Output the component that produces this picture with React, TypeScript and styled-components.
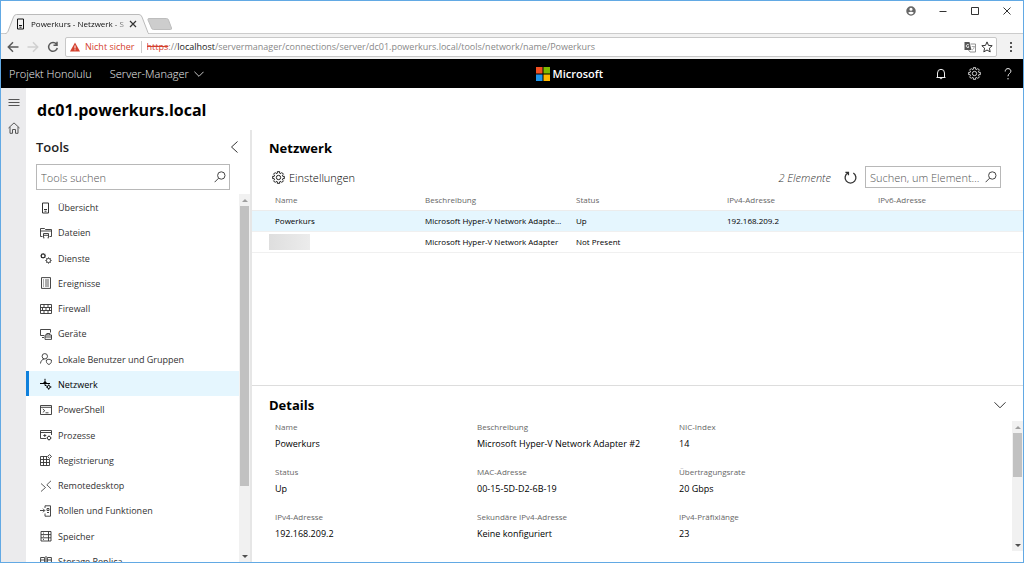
import React from 'react';
import styled, { createGlobalStyle } from 'styled-components';

const GlobalStyle = createGlobalStyle`
  * { box-sizing: border-box; }
  body { margin: 0; background: #fff; }
  button, input { font: inherit; color: inherit; }
  button { border: 0; padding: 0; background: none; cursor: pointer; }
  a { color: inherit; text-decoration: none; }
  h1, h2, ul, dl, dd, dt { margin: 0; padding: 0; }
`;

/* ---------- window and browser chrome ---------- */

const Window = styled.div`
  display: flex;
  flex-direction: column;
  height: 100vh;
  overflow: hidden;
  border: 1px solid #62a9e4;
  font-family: 'Open Sans', 'Noto Sans', sans-serif;
  font-size: 9px;
  color: #333;
  background: #fff;
`;

const TitleBar = styled.div`
  display: flex;
  justify-content: space-between;
  flex: none;
  height: 32px;
`;

const TabStrip = styled.div`
  display: flex;
  align-items: flex-end;
  padding-left: 4px;
`;

const Tab = styled.div`
  position: relative;
  display: flex;
  align-items: center;
  gap: 2px;
  width: 144px;
  height: 20px;
  margin-bottom: -1px;
  padding: 0 12px 0 10px;
`;

const TabShape = styled.svg`
  position: absolute;
  inset: 0;
  width: 100%;
  height: 100%;
`;

const TabTitle = styled.button`
  position: relative;
  display: flex;
  align-items: center;
  gap: 4px;
  flex: 1;
  min-width: 0;
  font-size: 8px;
  white-space: nowrap;
  text-align: left;
  line-height: 14px;
  color: #111;
  mask-image: linear-gradient(to right, #000 86%, rgba(0, 0, 0, 0.3));
`;

const TabClose = styled.button`
  position: relative;
  display: flex;
`;

const NewTab = styled.button`
  display: flex;
  margin: 0 0 3px -2px;
`;

const WindowControls = styled.div`
  display: flex;
  align-items: flex-start;
  padding-top: 3px;
`;

const WindowButton = styled.button`
  display: flex;
  align-items: center;
  justify-content: center;
  width: 32px;
  height: 14px;
  color: #333;
`;

const AddressRow = styled.div`
  display: flex;
  align-items: center;
  flex: none;
  gap: 8px;
  height: 26px;
  padding: 0 6px;
  border-top: 1px solid #ccc;
  background: #f2f2f2;
`;

const NavButton = styled.button<{ $dim?: boolean }>`
  display: flex;
  width: 12px;
  color: ${(p) => (p.$dim ? '#d0d0d0' : '#5a5a5a')};
`;

const AddressBox = styled.div`
  display: flex;
  align-items: center;
  flex: 1;
  gap: 5px;
  height: 20px;
  margin-left: -2px;
  padding: 0 3px 0 4px;
  border: 1px solid #c8c8c8;
  border-radius: 2px;
  color: #888;
  background: #fff;
`;

const Insecure = styled.span`
  padding-right: 6px;
  border-right: 1px solid #ccc;
  line-height: 12px;
  color: #d4422f;
  white-space: nowrap;
`;

const Url = styled.div`
  flex: 1;
  min-width: 0;
  overflow: hidden;
  white-space: nowrap;
  outline: none;

  s { color: #d4422f; }
  b { font-weight: 400; color: #222; }
`;

/* ---------- app shell ---------- */

const AppHeader = styled.header`
  display: flex;
  align-items: center;
  justify-content: space-between;
  flex: none;
  height: 29px;
  padding: 0 9px 0 8px;
  font-size: 11px;
  font-weight: 300;
  color: #f0f0f0;
  background: #000;
`;

const HeaderGroup = styled.div<{ $gap: number }>`
  display: flex;
  align-items: center;
  gap: ${(p) => p.$gap}px;
`;

const HeaderLink = styled.a`
  white-space: nowrap;
`;

const HeaderButton = styled.button`
  display: flex;
  align-items: center;
  gap: 5px;
`;

const Brand = styled.div`
  display: flex;
  align-items: center;
  gap: 3px;
  font-weight: 600;
  color: #fff;
`;

const Shell = styled.div`
  display: flex;
  flex: 1;
  min-height: 0;
`;

const Rail = styled.nav`
  display: flex;
  flex-direction: column;
  align-items: center;
  flex: none;
  gap: 14px;
  width: 25px;
  padding-top: 8px;
  color: #555;
  background: #ebebed;
`;

const RailButton = styled.button`
  display: flex;
`;

const Page = styled.div`
  display: flex;
  flex-direction: column;
  flex: 1;
  min-width: 0;
`;

const PageTitle = styled.h1`
  flex: none;
  height: 42px;
  padding-left: 11px;
  font-size: 16px;
  font-weight: 700;
  line-height: 44px;
  color: #000;
`;

const Columns = styled.div`
  display: flex;
  flex: 1;
  min-height: 0;
`;

/* ---------- tools panel ---------- */

const ToolsPanel = styled.aside`
  display: flex;
  flex-direction: column;
  flex: none;
  width: 226px;
  padding-top: 4px;
  border-right: 2px solid #e6e6e6;
`;

const ToolsHead = styled.div`
  display: flex;
  align-items: center;
  justify-content: space-between;
  flex: none;
  padding: 0 9px 0 10px;
`;

const SectionTitle = styled.h2<{ $dark?: boolean }>`
  font-size: 13px;
  font-weight: ${(p) => (p.$dark ? 700 : 600)};
  line-height: 26px;
  color: ${(p) => (p.$dark ? '#000' : '#222')};
`;

const IconButton = styled.button`
  display: flex;
  color: #333;
`;

const SearchBox = styled.label<{ $height: number }>`
  display: flex;
  align-items: center;
  flex: none;
  gap: 2px;
  height: ${(p) => p.$height}px;
  padding: 0 3px 0 4px;
  border: 1px solid #b8b8b8;
  font-size: 11px;
  color: #444;
  background: #fff;

  input {
    flex: 1;
    min-width: 0;
    padding: 0;
    border: 0;
    outline: 0;
    font-weight: 300;
    background: none;
    text-overflow: ellipsis;
  }
  input::placeholder { color: #555; }
`;

const ToolsSearch = styled(SearchBox)`
  margin: 4px 20px 4px 10px;
`;

const ToolsScroll = styled.div`
  display: flex;
  flex: 1;
  min-height: 0;
  overflow: hidden;
`;

const ToolList = styled.ul`
  display: grid;
  grid-auto-rows: minmax(25px, 1fr);
  flex: 1;
  min-height: calc(100% + 11px);
  height: max-content;
  list-style: none;
`;

const ToolLink = styled.a<{ $active?: boolean }>`
  display: flex;
  align-items: center;
  gap: 6px;
  height: 100%;
  padding: 2px 0 0 11px;
  border-left: 3px solid ${(p) => (p.$active ? '#0f80dc' : 'transparent')};
  color: ${(p) => (p.$active ? '#000' : '#333')};
  background: ${(p) => (p.$active ? '#e5f6fe' : 'none')};
`;

/* ---------- scrollbar ---------- */

const Track = styled.div`
  display: flex;
  flex-direction: column;
  flex: none;
  width: 11px;
  padding: 0 1px;
  background: #f1f1f1;
`;

const Arrow = styled.span<{ $down?: boolean }>`
  display: flex;
  align-items: center;
  justify-content: center;
  height: 12px;
  margin-top: ${(p) => (p.$down ? 'auto' : '0')};

  &::before {
    content: '';
    border: 3px solid transparent;
    border-top: ${(p) => (p.$down ? '3px solid #505050' : '0')};
    border-bottom: ${(p) => (p.$down ? '0' : '3px solid #a0a0a0')};
  }
`;

const Thumb = styled.span<{ $share: number }>`
  height: ${(p) => p.$share}%;
  background: #c1c1c1;
`;

function Scrollbar({ share }: { share: number }) {
  return (
    <Track aria-hidden="true">
      <Arrow />
      <Thumb $share={share} />
      <Arrow $down />
    </Track>
  );
}

/* ---------- main panel ---------- */

const Main = styled.main`
  display: flex;
  flex-direction: column;
  flex: 1;
  min-width: 0;
`;

const ListSection = styled.section`
  flex: 1;
  min-height: 0;
  padding-top: 5px;
`;

const PanelHead = styled.div`
  display: flex;
  align-items: center;
  justify-content: space-between;
  padding: 0 17px;
`;

const CommandBar = styled.div`
  display: flex;
  align-items: center;
  gap: 13px;
  height: 22px;
  margin-top: 5px;
  padding: 0 22px 0 20px;
  font-size: 11px;
  font-weight: 300;
`;

const Command = styled.button`
  display: flex;
  align-items: center;
  gap: 4px;
  margin-right: auto;
  color: #000;
`;

const Count = styled.span`
  font-style: italic;
  color: #333;
`;

const ItemSearch = styled(SearchBox)`
  width: 136px;
  margin-left: -5px;
`;

const Table = styled.table`
  width: 100%;
  margin-top: 1px;
  border-collapse: collapse;
  table-layout: fixed;

  th:first-child { width: 167px; }
  th:first-child, td:first-child { padding-left: 23px; }
`;

const HeadCell = styled.th`
  height: 21px;
  padding: 0 6px;
  border-bottom: 1px solid #ececec;
  font-size: 8px;
  font-weight: 400;
  text-align: left;
  color: #666;
`;

const Row = styled.tr<{ $selected?: boolean }>`
  height: 21px;
  border-bottom: 1px solid #f0f0f0;
  background: ${(p) => (p.$selected ? '#e5f6fe' : 'none')};
`;

const Cell = styled.td`
  padding: 0 6px;
  overflow: hidden;
  font-size: 8px;
  white-space: nowrap;
  text-overflow: ellipsis;
  color: #000;
`;

const Redacted = styled.span`
  display: block;
  width: 41px;
  height: 16px;
  margin-left: -6px;
  background: linear-gradient(to right, #dedede, #ececec);
`;

const DetailSection = styled.section`
  flex: none;
  padding: 6px 0 11px;
  border-top: 1px solid #ddd;
`;

const DetailBody = styled.div`
  display: flex;
  height: 130px;
  margin-top: 3px;
`;

const Fields = styled.dl`
  display: grid;
  grid-template-columns: 202px 202px 1fr;
  grid-auto-rows: 45px;
  flex: 1;
  padding-left: 23px;

  dt {
    font-size: 8px;
    line-height: 12px;
    color: #666;
  }
  dd {
    margin-top: 4px;
    line-height: 14px;
    color: #000;
  }
`;

/* ---------- icons ---------- */

const Glyph = styled.svg`
  flex: none;
`;

type IconProps = { size?: number; box?: number; weight?: number; children: React.ReactNode };

function Icon({ size = 12, box = 12, weight = 1, children }: IconProps) {
  return (
    <Glyph
      width={size}
      height={size}
      viewBox={`0 0 ${box} ${box}`}
      fill="none"
      stroke="currentColor"
      strokeWidth={weight}
      aria-hidden="true"
    >
      {children}
    </Glyph>
  );
}

const ServerIcon = () => (
  <Icon>
    <path d="M2.500 1h6v10h-6zM4.500 9.200h2M4 7.500h3" />
  </Icon>
);

const GearIcon = ({ size = 12 }: { size?: number }) => {
  const teeth = Array.from({ length: 8 }, (_, i) => {
    const a = (i * Math.PI) / 4;
    const at = (r: number, d: number) =>
      `${(12 + r * Math.cos(a + d)).toFixed(2)} ${(12 + r * Math.sin(a + d)).toFixed(2)}`;
    return `${at(8.2, -0.26)} L${at(11, -0.2)} L${at(11, 0.2)} L${at(8.2, 0.26)}`;
  });
  return (
    <Icon size={size} box={24} weight={1.6}>
      <path d={`M${teeth.join(' L')}Z`} />
      <circle cx="12" cy="12" r="4" />
    </Icon>
  );
};

const SearchIcon = () => (
  <Icon size={12}>
    <circle cx="7.3" cy="4.5" r="3.7" />
    <path d="M4.6 7.2 0.6 11.2" />
  </Icon>
);

const ChevronDown = ({ size = 10 }: { size?: number }) => (
  <Icon size={size}>
    <path d="M.5 3.3 6 8.8l5.5-5.5" />
  </Icon>
);

const toolIcons: Record<string, React.ReactNode> = {
  overview: <ServerIcon />,
  files: (
    <Icon weight={0.9}>
      <path d="M2.5 9.5H.5v-8h4l1 1h6v7h-2M.5 4h11M3.5 10.5v-4h5v4M3.5 8.3h5M3 10.8h1.5M7.5 10.8H9" />
    </Icon>
  ),
  services: (
    <Icon weight={0.9}>
      <path d="M1.500 2.200h3.300v3.300H1.500zM3.100 1v1M3.100 5.500v1M.4 3.900h1M4.900 3.900h1" strokeWidth="1.100" />
      <circle cx="8.500" cy="8.500" r="2.100" />
      <path d="M8.500 5.400v1M8.500 10.600v1M5.400 8.500h1M10.600 8.500h1M6.300 6.300l.7.700M10 10l.7.700M6.300 10.700l.7-.7M10 7l.7-.7" />
    </Icon>
  ),
  events: (
    <Icon weight={0.9}>
      <path d="M1.500.6h9v10.800h-9z" />
      <path d="M3 3h1M5 3h4M3 5h1M5 5h4M3 7h1M5 7h4M3 9h1M5 9h4" strokeWidth="0.800" />
    </Icon>
  ),
  firewall: (
    <Icon weight={0.9}>
      <path d="M.5 1.5h11v9H.5zM.5 4.5h11M.5 7.5h11M4 1.5v3M8 1.5v3M6 4.5v3M2.5 4.5v3M9.5 4.5v3M4 7.5v3M8 7.5v3" />
    </Icon>
  ),
  devices: (
    <Icon weight={0.9}>
      <path d="M4 7.5H.5v-6h10v3M2 9.5h2M5 7h6.5v4.4H5zM6.8 7V5.5h3V7M5 9h6.5" />
    </Icon>
  ),
  users: (
    <Icon weight={0.9}>
      <circle cx="4.800" cy="3.300" r="2.700" />
      <path d="M.5 10.500C.7 8 2.200 6.300 4.300 6M6.400 7 8.900 6.200l2.500.8v1.500c0 1.400-1 2.300-2.500 3-1.500-.7-2.500-1.600-2.500-3z" />
    </Icon>
  ),
  network: (
    <Icon>
      <path d="M0 5.500h10M5 .8v2" />
      <path d="M3 5.500 5 3l2 2.500z" fill="currentColor" strokeWidth="0.500" />
      <circle cx="8.700" cy="9" r="1.500" />
      <path d="M8.700 6.500v1M8.700 10.500v1.200M6.200 9h1M10.200 9h1.200M5 5.500v2h1.500" />
    </Icon>
  ),
  powershell: (
    <Icon weight={0.9}>
      <path d="M.5 1.500h11v9H.5zM.5 3.300h11M2.800 5l2 1.700-2 1.700M5.500 8.800h3" />
    </Icon>
  ),
  processes: (
    <Icon weight={0.9}>
      <path d="M6 9.500H.5v-8h11V6M.5 3.500h11M4.800 5v3M3.300 6.500h3" />
      <circle cx="9" cy="9" r="1.700" />
      <path d="M9 6.500v.8M9 10.700v.8M6.500 9h.8M10.700 9h.8" />
    </Icon>
  ),
  registry: (
    <Icon weight={0.9}>
      <path d="M7 2.500H.5v9h9V5.500M.5 5.500h9M.5 8.500h9M3.500 2.500v9M6.500 2.500v9M9.500.6l2 1.900-2 1.900-1.900-1.900z" />
    </Icon>
  ),
  remote: (
    <Icon weight={0.8}>
      <path d="M1 3.500l4.500 4L1 11.500M11 .8 6.800 4.800l4.200 4" />
    </Icon>
  ),
  roles: (
    <Icon weight={0.9}>
      <path d="M0 5.500h4.500M3 3.700l1.800 1.800L3 7.300M5 3V.8h5.500v10.400H5V8.500M7 3.500h2v2H7zM7 7.500h2" />
    </Icon>
  ),
  storage: (
    <Icon weight={0.9}>
      <path d="M1 1.500h10v9.500H1zM1 4.600h10M1 7.800h10M3 3.100h1M3 6.200h1M3 9.400h1M8.500 1.500v9.500" />
    </Icon>
  ),
  replica: (
    <Icon weight={0.9}>
      <path d="M.6 2.500h4v8h-4zM7.400 2.500h4v8h-4zM.6 5h4M7.400 5h4M6 1v11" />
    </Icon>
  ),
};

/* ---------- data ---------- */

const tools = [
  { label: 'Übersicht', icon: 'overview' },
  { label: 'Dateien', icon: 'files' },
  { label: 'Dienste', icon: 'services' },
  { label: 'Ereignisse', icon: 'events' },
  { label: 'Firewall', icon: 'firewall' },
  { label: 'Geräte', icon: 'devices' },
  { label: 'Lokale Benutzer und Gruppen', icon: 'users' },
  { label: 'Netzwerk', icon: 'network', active: true },
  { label: 'PowerShell', icon: 'powershell' },
  { label: 'Prozesse', icon: 'processes' },
  { label: 'Registrierung', icon: 'registry' },
  { label: 'Remotedesktop', icon: 'remote' },
  { label: 'Rollen und Funktionen', icon: 'roles' },
  { label: 'Speicher', icon: 'storage' },
  { label: 'Storage Replica', icon: 'replica' },
];

const headings = ['Name', 'Beschreibung', 'Status', 'IPv4-Adresse', 'IPv6-Adresse'];

const details = [
  ['Name', 'Powerkurs'],
  ['Beschreibung', 'Microsoft Hyper-V Network Adapter #2'],
  ['NIC-Index', '14'],
  ['Status', 'Up'],
  ['MAC-Adresse', '00-15-5D-D2-6B-19'],
  ['Übertragungsrate', '20 Gbps'],
  ['IPv4-Adresse', '192.168.209.2'],
  ['Sekundäre IPv4-Adresse', 'Keine konfiguriert'],
  ['IPv4-Präfixlänge', '23'],
];

/* ---------- views ---------- */

function BrowserChrome() {
  return (
    <>
      <TitleBar>
        <TabStrip>
          <Tab>
            <TabShape viewBox="0 0 144 20" preserveAspectRatio="none" aria-hidden="true">
              <path d="M0 20C2 19 3 18 3.500 16L8.500 3Q9.300.5 11.500.5H134Q136 .5 137 3l5 13q.8 3 2 4" fill="#f2f2f2" stroke="#bbb" />
            </TabShape>
            <TabTitle>
              <ServerIcon />
              Powerkurs - Netzwerk - S
            </TabTitle>
            <TabClose aria-label="Tab schließen">
              <Icon size={8} weight={1.800}>
                <path d="M1.500 1.500l9 9M10.500 1.500l-9 9" />
              </Icon>
            </TabClose>
          </Tab>
          <NewTab aria-label="Neuer Tab">
            <svg width="25" height="12" viewBox="0 0 25 12" aria-hidden="true">
              <path d="M2 .5h17.500q1.500 0 2 1.500l3 8q.4 1.500-1 1.500H6.500Q5 11.500 4.500 10L1 2Q.5.5 2 .5z" fill="#cdcdcd" stroke="#bdbdbd" />
            </svg>
          </NewTab>
        </TabStrip>
        <WindowControls>
          <WindowButton aria-label="Profil">
            <Icon size={10} weight={0}>
              <path
                fill="#666"
                fillRule="evenodd"
                d="M6 .3a5.700 5.700 0 1 1 0 11.400A5.700 5.700 0 0 1 6 .3zM6 2a1.900 1.900 0 1 0 0 3.800A1.900 1.900 0 0 0 6 2zM2.500 8.200Q4 10.300 6 10.300t3.500-2.100Q8 7 6 7T2.500 8.200z"
              />
            </Icon>
          </WindowButton>
          <WindowButton aria-label="Minimieren">
            <Icon size={8} box={8}>
              <path d="M.5 4.500h7" />
            </Icon>
          </WindowButton>
          <WindowButton aria-label="Maximieren">
            <Icon size={8} box={8}>
              <path d="M.5.5h7v7h-7z" />
            </Icon>
          </WindowButton>
          <WindowButton aria-label="Schließen">
            <Icon size={8} box={8}>
              <path d="M.5.5l7 7M7.500.5l-7 7" />
            </Icon>
          </WindowButton>
        </WindowControls>
      </TitleBar>
      <AddressRow>
        <NavButton aria-label="Zurück">
          <Icon weight={1.500}>
            <path d="M11.500 6H1.500M6 1.300 1.300 6 6 10.700" />
          </Icon>
        </NavButton>
        <NavButton $dim aria-label="Vorwärts">
          <Icon weight={1.500}>
            <path d="M.5 6h10M6 1.300 10.700 6 6 10.700" />
          </Icon>
        </NavButton>
        <NavButton aria-label="Neu laden">
          <Icon weight={1.500}>
            <path d="M9.500 3.200A4.400 4.400 0 1 0 10.300 7M10 .8v3.500H6.500" />
          </Icon>
        </NavButton>
        <AddressBox>
          <svg width="10" height="10" viewBox="0 0 10 10" aria-hidden="true">
            <path d="M5 0.500 10 9.500H0z" fill="#d4422f" />
            <path d="M5 3.500v3M5 7.300v1" stroke="#fff" />
          </svg>
          <Insecure>Nicht sicher</Insecure>
          <Url role="textbox" aria-label="Adresse" contentEditable suppressContentEditableWarning spellCheck={false}>
            <s>https</s>://<b>localhost</b>/servermanager/connections/server/dc01.powerkurs.local/tools/network/name/Powerkurs
          </Url>
          <IconButton aria-label="Übersetzen">
            <Icon weight={0.900}>
              <path d="M6.500 3H11.500v8H6l-1.500-2" stroke="#888" />
              <path d="M.5 1h5l2 8H.5z" fill="#555" stroke="none" />
              <path d="M5 4.200A1.500 1.500 0 1 0 5 5.800H3.800" stroke="#fff" strokeWidth="0.800" />
              <path d="M7.800 5.500h3M8.200 9c1.200-.8 1.800-1.800 2-3.300" stroke="#888" strokeWidth="0.700" />
            </Icon>
          </IconButton>
          <IconButton aria-label="Lesezeichen">
            <Icon>
              <path d="M6 .9l1.500 3.500 3.700.3-2.800 2.500.8 3.700L6 9l-3.200 1.900.8-3.700L.8 4.700l3.700-.3z" />
            </Icon>
          </IconButton>
        </AddressBox>
        <NavButton aria-label="Menü">
          <Icon weight={0}>
            <path fill="#555" d="M5 1h2v2H5zM5 5h2v2H5zM5 9h2v2H5z" />
          </Icon>
        </NavButton>
      </AddressRow>
    </>
  );
}

function TopBar() {
  return (
    <AppHeader>
      <HeaderGroup $gap={18}>
        <HeaderLink href="#home">Projekt Honolulu</HeaderLink>
        <HeaderButton>
          Server-Manager
          <ChevronDown />
        </HeaderButton>
      </HeaderGroup>
      <Brand>
        <svg width="14" height="14" viewBox="0 0 14 14" aria-hidden="true">
          <path fill="#f25022" d="M0 0h6.500v6.500H0z" />
          <path fill="#7fba00" d="M7.500 0H14v6.500H7.500z" />
          <path fill="#1f96ea" d="M0 7.500h6.500V14H0z" />
          <path fill="#ffb900" d="M7.500 7.500H14V14H7.500z" />
        </svg>
        Microsoft
      </Brand>
      <HeaderGroup $gap={21}>
        <HeaderButton aria-label="Benachrichtigungen">
          <Icon>
            <path d="M1.500 9.500h9M2.500 9.500V5a3.500 3.700 0 0 1 7 0v4.500M5 9.800a1 1 0 0 0 2 0" />
          </Icon>
        </HeaderButton>
        <HeaderButton aria-label="Einstellungen">
          <GearIcon size={13} />
        </HeaderButton>
        <HeaderButton aria-label="Hilfe">
          <Icon>
            <path d="M3.200 3.500C3.200 1.600 4.400.6 6 .6s2.900 1 2.900 2.600C8.900 5.400 6 5.500 6 8.300M6 10v1.400" />
          </Icon>
        </HeaderButton>
      </HeaderGroup>
    </AppHeader>
  );
}

function Tools() {
  return (
    <ToolsPanel>
      <ToolsHead>
        <SectionTitle>Tools</SectionTitle>
        <IconButton aria-label="Bereich einklappen">
          <Icon>
            <path d="M8.500.5 2.500 6l6 5.500" />
          </Icon>
        </IconButton>
      </ToolsHead>
      <ToolsSearch $height={26}>
        <input type="text" aria-label="Tools suchen" placeholder="Tools suchen" />
        <SearchIcon />
      </ToolsSearch>
      <ToolsScroll>
        <ToolList>
          {tools.map((t) => (
            <li key={t.label}>
              <ToolLink href={`#${t.icon}`} $active={t.active} aria-current={t.active ? 'page' : undefined}>
                {toolIcons[t.icon]}
                {t.label}
              </ToolLink>
            </li>
          ))}
        </ToolList>
        <Scrollbar share={76} />
      </ToolsScroll>
    </ToolsPanel>
  );
}

function NetworkList() {
  return (
    <ListSection>
      <PanelHead>
        <SectionTitle $dark>Netzwerk</SectionTitle>
      </PanelHead>
      <CommandBar>
        <Command>
          <GearIcon size={13} />
          Einstellungen
        </Command>
        <Count>2 Elemente</Count>
        <IconButton aria-label="Aktualisieren">
          <Icon size={13} weight={1.200}>
            <path d="M3.400 1.900A5 5 0 1 0 8.600 1.900M1.300 1.300h2.800V4" />
          </Icon>
        </IconButton>
        <ItemSearch $height={22}>
          <input type="text" aria-label="Elemente suchen" placeholder="Suchen, um Elemente zu filtern" />
          <SearchIcon />
        </ItemSearch>
      </CommandBar>
      <Table>
        <thead>
          <tr>
            {headings.map((h) => (
              <HeadCell key={h} scope="col">
                {h}
              </HeadCell>
            ))}
          </tr>
        </thead>
        <tbody>
          <Row $selected>
            <Cell>Powerkurs</Cell>
            <Cell>Microsoft Hyper-V Network Adapter #2</Cell>
            <Cell>Up</Cell>
            <Cell>192.168.209.2</Cell>
            <Cell />
          </Row>
          <Row>
            <Cell>
              <Redacted />
            </Cell>
            <Cell>Microsoft Hyper-V Network Adapter</Cell>
            <Cell>Not Present</Cell>
            <Cell />
            <Cell />
          </Row>
        </tbody>
      </Table>
    </ListSection>
  );
}

function Details() {
  return (
    <DetailSection>
      <PanelHead>
        <SectionTitle $dark>Details</SectionTitle>
        <IconButton aria-label="Details ausblenden">
          <ChevronDown size={12} />
        </IconButton>
      </PanelHead>
      <DetailBody>
        <Fields>
          {details.map(([label, value]) => (
            <div key={label}>
              <dt>{label}</dt>
              <dd>{value}</dd>
            </div>
          ))}
        </Fields>
        <Scrollbar share={34} />
      </DetailBody>
    </DetailSection>
  );
}

export default function App() {
  return (
    <>
      <GlobalStyle />
      <Window>
        <BrowserChrome />
        <TopBar />
        <Shell>
          <Rail>
            <RailButton aria-label="Menü öffnen">
              <Icon>
                <path d="M.5 3.500h11M.5 6.500h11M.5 9.500h11" />
              </Icon>
            </RailButton>
            <RailButton aria-label="Startseite">
              <Icon>
                <path d="M.5 6 6 .9 11.500 6M2 5v6.300h2.500V7.500h3v3.800H10V5" />
              </Icon>
            </RailButton>
          </Rail>
          <Page>
            <PageTitle>dc01.powerkurs.local</PageTitle>
            <Columns>
              <Tools />
              <Main>
                <NetworkList />
                <Details />
              </Main>
            </Columns>
          </Page>
        </Shell>
      </Window>
    </>
  );
}
